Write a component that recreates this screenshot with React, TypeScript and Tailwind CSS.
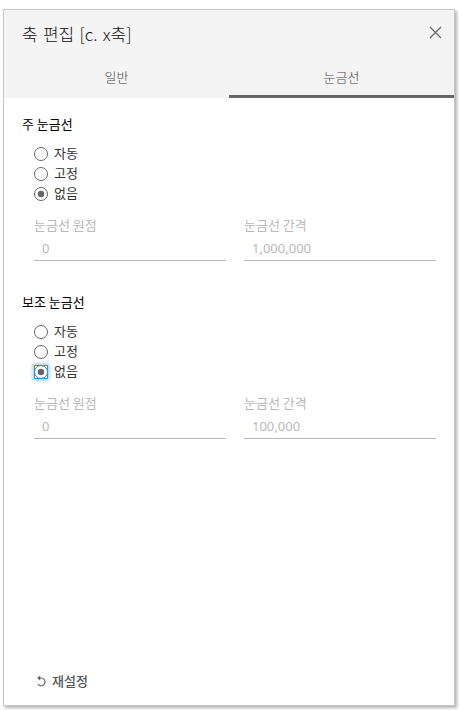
import { useState } from 'react'

type Mode = '자동' | '고정' | '없음'

const MODES: Mode[] = ['자동', '고정', '없음']
const TABS = ['일반', '눈금선']

function Radio({ label, checked, focused, onSelect }: {
  label: Mode
  checked: boolean
  focused: boolean
  onSelect: () => void
}) {
  return (
    <button
      role="radio"
      aria-checked={checked}
      onClick={onSelect}
      className="flex h-5 items-center gap-[6px] text-left text-[#333] focus:outline-none"
    >
      <span className={`h-[14px] w-[14px] ${focused ? 'shadow-[0_0_4px_1px_#8cc8f0]' : ''}`}>
        <svg width="14" height="14" viewBox="0 0 14 14">
          {focused && <rect x="0.5" y="0.5" width="13" height="13" fill="#fff" />}
          <circle cx="7" cy="7" r="6.5" fill="#fff" stroke="#666" />
          {checked && <circle cx="7" cy="7" r="3.2" fill="#666" />}
          {focused && <rect x="0.5" y="0.5" width="13" height="13" fill="none" stroke="#2f96dc" />}
        </svg>
      </span>
      <span className="pb-[2px]">{label}</span>
    </button>
  )
}

function Field({ label, value }: { label: string; value: string }) {
  return (
    <div className="w-48 text-[#b9b9b9]">
      <div className="h-5 leading-[19px]">{label}</div>
      <div className="h-[26px] border-b border-[#b9b9b9] pl-2 font-['Noto_Sans',sans-serif] leading-[26px]">
        {value}
      </div>
    </div>
  )
}

function GridSection({ title, interval, focusable }: {
  title: string
  interval: string
  focusable?: boolean
}) {
  const [mode, setMode] = useState<Mode>('없음')

  return (
    <section className="h-[178px] pl-[18px]">
      <h2 className="h-5 font-normal leading-5 text-black">{title}</h2>
      <div role="radiogroup" className="mt-[10px] flex flex-col pl-3">
        {MODES.map((m) => (
          <Radio
            key={m}
            label={m}
            checked={mode === m}
            focused={!!focusable && mode === m}
            onSelect={() => setMode(m)}
          />
        ))}
      </div>
      <div className="mt-[11px] flex gap-[18px] pl-3">
        <Field label="눈금선 원점" value="0" />
        <Field label="눈금선 간격" value={interval} />
      </div>
    </section>
  )
}

export default function App() {
  const [tab, setTab] = useState('눈금선')

  return (
    <div className="h-[710px] w-[463px] bg-white pl-[3px] pt-[9px] font-['Noto_Sans_CJK_KR',sans-serif] text-[13px]">
      <div className="flex h-[697px] w-[452px] flex-col border border-[#c8c8c8] bg-white shadow-[2px_2px_3px_#b0b0b0]">
        <header className="h-[88px] bg-[#f4f4f4]">
          <div className="flex h-[50px] items-center justify-between pl-[18px] pr-[12px]">
            <h1 className="pb-[2px] text-[17px] font-light [word-spacing:1.5px] text-[#111]">축 편집 [c. x축]</h1>
            <button aria-label="닫기" className="-mt-[5px]">
              <svg width="13" height="13" viewBox="0 0 13 13">
                <path d="M1 1 L12 12 M12 1 L1 12" stroke="#666" strokeWidth="1.2" fill="none" />
              </svg>
            </button>
          </div>
          <div className="flex h-[38px]">
            {TABS.map((t) => (
              <button
                key={t}
                onClick={() => setTab(t)}
                className={`flex-1 border-b-[3px] pb-[2px] font-light text-[#444] ${tab === t ? 'border-[#666]' : 'border-transparent'}`}
              >
                {t}
              </button>
            ))}
          </div>
        </header>

        <main className="flex-1 pt-4">
          <GridSection title="주 눈금선" interval="1,000,000" />
          <GridSection title="보조 눈금선" interval="100,000" focusable />
        </main>

        <footer className="flex h-[34px] items-start pl-[32px]">
          <button className="flex h-5 items-center gap-[5px] text-[#555]">
            <svg width="11" height="12" viewBox="0 0 11 12" fill="none" stroke="#666" strokeWidth="1.2">
              <path d="M2 3 H5.5 A3.9 3.9 0 1 1 2 9.2" />
              <path d="M1 3 L4.2 0.6 V5.4 Z" fill="#666" stroke="none" />
            </svg>
            <span className="font-medium">재설정</span>
          </button>
        </footer>
      </div>
    </div>
  )
}
